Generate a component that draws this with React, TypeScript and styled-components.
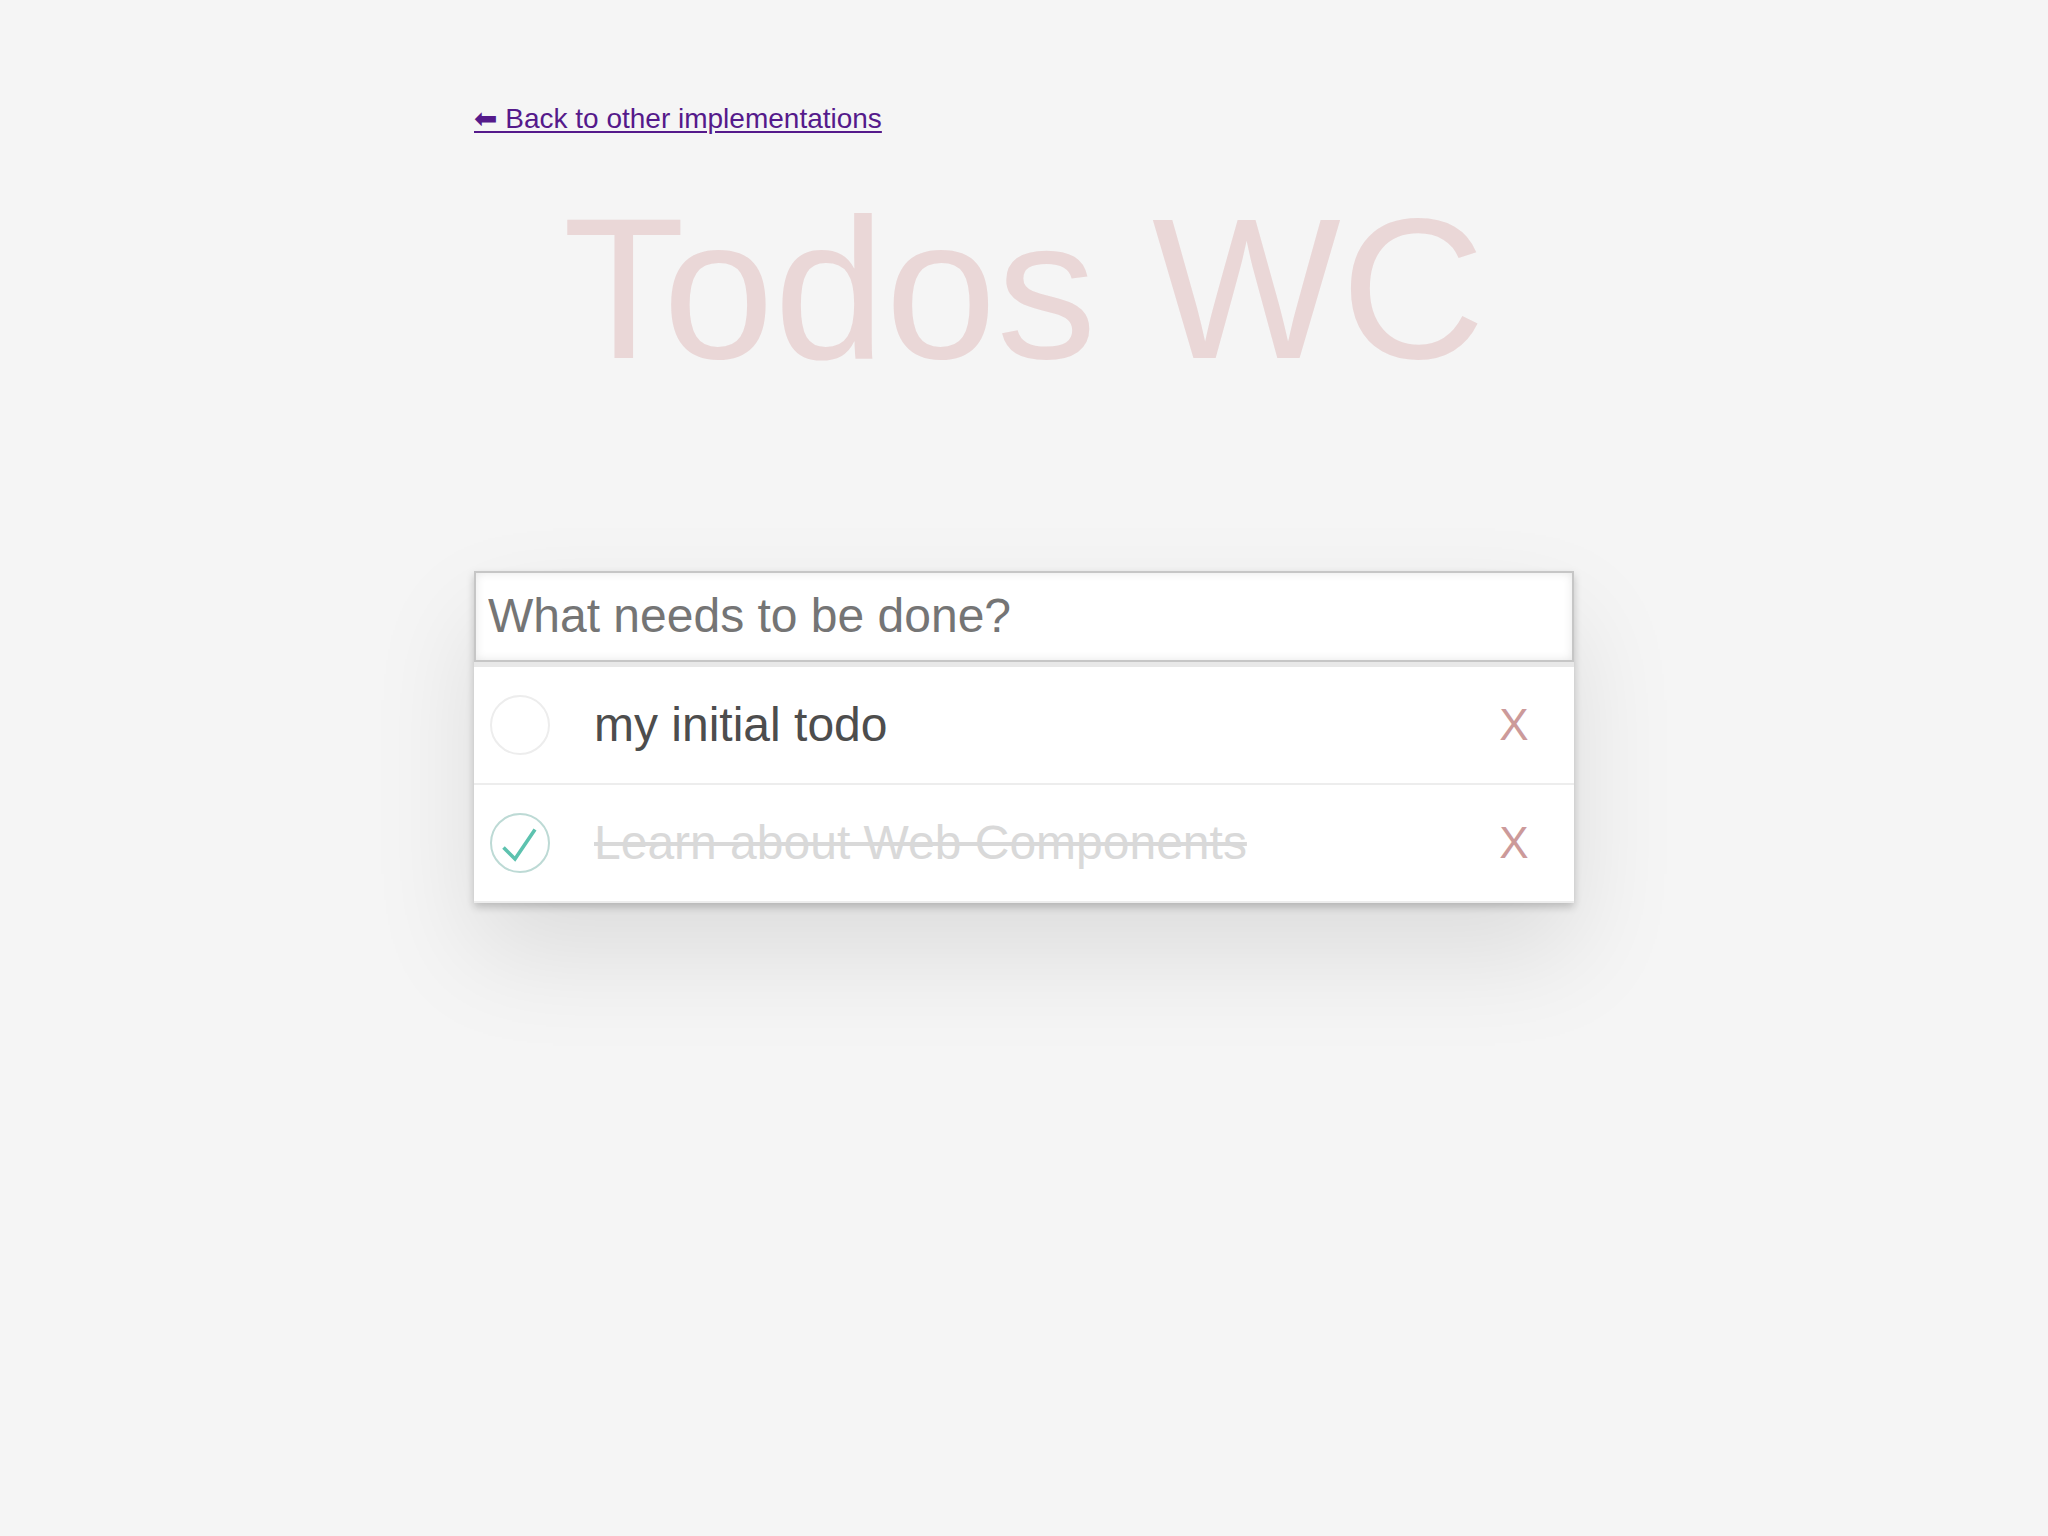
import React from 'react';
import styled, { createGlobalStyle } from 'styled-components';

const GlobalStyle = createGlobalStyle`
  html, body {
    margin: 0;
    padding: 0;
    background: #f5f5f5;
    font-family: "Liberation Sans", "DejaVu Sans", Arial, sans-serif;
    color: #4d4d4d;
  }
`;

const Page = styled.div`
  width: 1100px;
  min-height: 1536px;
  box-sizing: border-box;
  margin: 0 auto;
  padding-top: 103px;
`;

const BackLink = styled.a`
  display: inline-block;
  font-size: 28px;
  line-height: 32px;
  color: #551a8b;
  text-decoration: underline;
  text-underline-offset: 3px;
`;

const Title = styled.h1`
  margin: 34px 0 0;
  font-size: 200px;
  line-height: 240px;
  font-weight: 100;
  text-align: center;
  color: rgba(175, 47, 47, 0.15);
`;

const Card = styled.section`
  margin-top: 162px;
  background: #e8e8e8;
  box-shadow: 0 4px 8px 0 rgba(0, 0, 0, 0.2), 0 50px 100px 0 rgba(0, 0, 0, 0.1);
`;

const NewTodo = styled.input`
  display: block;
  box-sizing: border-box;
  width: 100%;
  height: 91px;
  margin: 0 0 5px;
  padding: 0 12px 2px;
  border: 2px solid #c6c6c6;
  background: #fff;
  font-family: "Liberation Sans", Arial, sans-serif;
  font-size: 48px;
  color: #4d4d4d;
  outline: none;
  box-shadow: inset 0 0 10px rgba(0, 0, 0, 0.1);

  &::placeholder {
    color: #757575;
  }
`;

const List = styled.ul`
  margin: 0;
  padding: 0;
  list-style: none;
  background: #fff;
`;

const Item = styled.li`
  display: flex;
  align-items: center;
  height: 116px;
  padding-left: 16px;
  border-bottom: 2px solid #ededed;
`;

const Toggle = styled.svg`
  flex: none;
  width: 60px;
  height: 60px;
  cursor: pointer;
`;

const Label = styled.span<{ $done: boolean }>`
  flex: 1;
  margin-left: 44px;
  font-size: 48px;
  line-height: 56px;
  color: ${(p) => (p.$done ? '#d9d9d9' : '#4d4d4d')};
  text-decoration: ${(p) => (p.$done ? 'line-through' : 'none')};
  white-space: nowrap;
`;

const Destroy = styled.button`
  flex: none;
  width: 80px;
  margin-right: 20px;
  padding: 0;
  border: 0;
  background: none;
  font-family: "Liberation Sans", Arial, sans-serif;
  font-size: 44px;
  line-height: 56px;
  color: #cc9a9a;
  text-align: center;
  cursor: pointer;
`;

type Todo = { text: string; done: boolean };

const todos: Todo[] = [
  { text: 'my initial todo', done: false },
  { text: 'Learn about Web Components', done: true },
];

const Check = ({ done }: { done: boolean }) => (
  <Toggle viewBox="0 0 60 60">
    <circle
      cx="30"
      cy="30"
      r="29"
      fill="none"
      stroke={done ? '#bddad5' : '#ededed'}
      strokeWidth="2"
    />
    {done && (
      <polyline
        points="13.5,34.5 25,46 45,16.5"
        fill="none"
        stroke="#5dc2af"
        strokeWidth="3.6"
      />
    )}
  </Toggle>
);

const App: React.FC = () => {
  return (
    <>
      <GlobalStyle />
      <Page>
        <BackLink href="#">⬅ Back to other implementations</BackLink>
        <Title>Todos WC</Title>
        <Card>
          <NewTodo placeholder="What needs to be done?" />
          <List>
            {todos.map((t) => (
              <Item key={t.text}>
                <Check done={t.done} />
                <Label $done={t.done}>{t.text}</Label>
                <Destroy>X</Destroy>
              </Item>
            ))}
          </List>
        </Card>
      </Page>
    </>
  );
};

export default App;
